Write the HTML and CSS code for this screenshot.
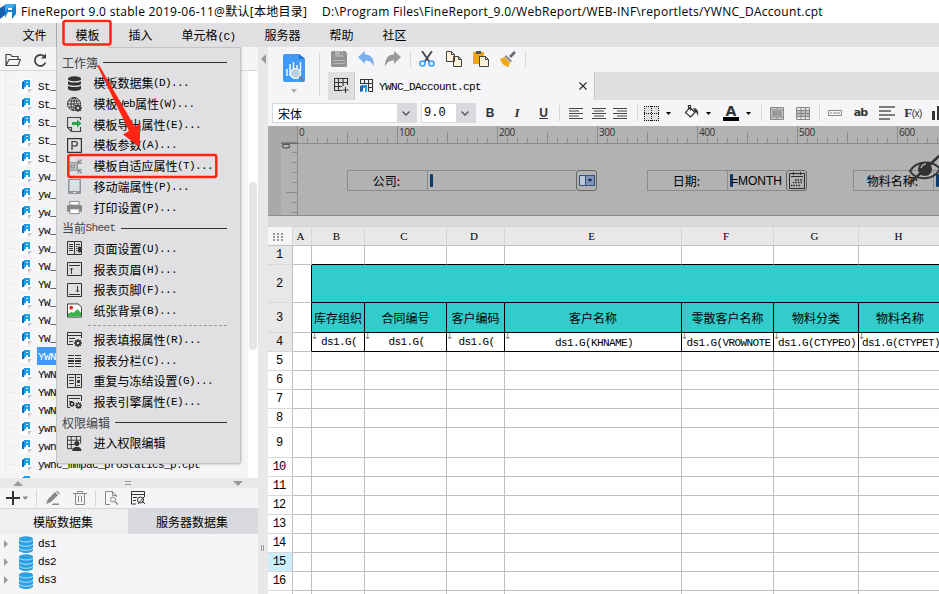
FILE: index.html
```
<!DOCTYPE html>
<html lang="zh-CN">
<head>
  <meta charset="utf-8">
  <title>FineReport 9.0</title>
  <link rel="stylesheet" href="styles.css">
</head>
<body>
  <svg class="defs">
    <symbol id="file" viewBox="0 0 12 14">
      <path d="M0 0h12v9l-4 5H0z" fill="#fff"/>
      <path d="M8 14V10h4z" fill="#c4c4c6"/>
      <path d="M2 3l3-2v6l-1 3H2z" fill="#0a6fc8"/>
      <path d="M4 1h6v7H8V6H6v2H4z" fill="#1b9ee6"/>
      <path d="M6 3h2v1H6z" fill="#d5ecfa"/>
    </symbol>
    <symbol id="db" viewBox="0 0 14 17">
      <path d="M0 3v11c0 4 14 4 14 0V3z" fill="#2aa1e0"/>
      <ellipse cx="7" cy="3" rx="7" ry="2.7" fill="#2aa1e0"/>
      <path d="M0 3.7c1 3 13 3 14 0M0 8c1 3 13 3 14 0M0 12c1 3 13 3 14 0" fill="none" stroke="#d9edf8" stroke-width=".8"/>
    </symbol>
    <symbol id="gear" viewBox="0 0 8 8">
      <circle cx="4" cy="4" r="2.1" fill="none" stroke="#333" stroke-width="1.6"/>
      <path d="M4 0v1.5M4 6.500V8M0 4h1.500M6.500 4H8M1.200 1.200l1 1M5.800 5.800l1 1M6.800 1.200l-1 1M2.200 5.800l-1 1" stroke="#333" stroke-width="1.400"/>
    </symbol>
    <symbol id="down" viewBox="0 0 5 3"><path d="M0 0h5L2.500 3z"/></symbol>
  </svg>

  <header class="titlebar">
    <svg width="16" height="17" viewBox="0 0 16 17">
      <path d="M0 5l5-3v10l-5 4z" fill="#1a5fae"/>
      <path d="M5 1h11v10l-4 5V9H8l-3 6z" fill="#1783d3"/>
      <path d="M5 1h11l-4 4H8L5 8z" fill="#38b0ee"/>
      <path d="M8 5h4v2H8z" fill="#fff"/>
    </svg>
    <span class="app">FineReport 9.0 stable 2019-06-11@默认[本地目录]</span>
    <span class="path">D:\Program Files\FineReport_9.0/WebReport/WEB-INF\reportlets/YWNC_DAccount.cpt</span>
  </header>

  <nav class="menubar">
    <span>文件</span><span>模板</span><span>插入</span><span>单元格<i>(C)</i></span><span>服务器</span><span>帮助</span><span>社区</span>
  </nav>

  <div class="main">
    <aside>
      <div class="tree-tools">
        <svg width="16" height="14" viewBox="0 0 16 14" fill="none" stroke="#444" stroke-width="1.200"><path d="M1 12V1.500h4.500l1.500 2h6V6M1 12.500L4 6.500h11.500L13 12.500z"/></svg>
        <svg width="15" height="15" viewBox="0 0 15 15" fill="none" stroke="#444" stroke-width="1.800"><path d="M12.500 9.500A5.500 5.500 0 1 1 11 3.300"/><path d="M13 .5v5H8z" fill="#444" stroke="none"/></svg>
      </div>
      <div class="tree">
        <ul>
          <li><svg><use href="#file"/></svg><i>St_</i>
          <li><svg><use href="#file"/></svg><i>St_</i>
          <li><svg><use href="#file"/></svg><i>St_</i>
          <li><svg><use href="#file"/></svg><i>St_</i>
          <li><svg><use href="#file"/></svg><i>St_</i>
          <li><svg><use href="#file"/></svg><i>yw_</i>
          <li><svg><use href="#file"/></svg><i>yw_</i>
          <li><svg><use href="#file"/></svg><i>yw_</i>
          <li><svg><use href="#file"/></svg><i>yw_</i>
          <li><svg><use href="#file"/></svg><i>yw_</i>
          <li><svg><use href="#file"/></svg><i>YW_</i>
          <li><svg><use href="#file"/></svg><i>YW_</i>
          <li><svg><use href="#file"/></svg><i>YW_</i>
          <li><svg><use href="#file"/></svg><i>YW_</i>
          <li><svg><use href="#file"/></svg><i>YW_</i>
          <li class="selected"><svg><use href="#file"/></svg><i>YWN</i>
          <li><svg><use href="#file"/></svg><i>YWN</i>
          <li><svg><use href="#file"/></svg><i>YWN</i>
          <li><svg><use href="#file"/></svg><i>YWN</i>
          <li><svg><use href="#file"/></svg><i>ywn</i>
          <li><svg><use href="#file"/></svg><i>ywn</i>
          <li><svg><use href="#file"/></svg><i>ywnc_mmpac_proStatics_p.cpt</i>
          <li><svg><use href="#file"/></svg>
        </ul>
        <div class="scroll"><div class="thumb"></div></div>
      </div>
      <div class="hsplit">
        <svg width="10" height="5"><path d="M0 5h10L5 0z"/></svg>
        <svg width="6" height="4"><path d="M0 0h6v1H0zM0 3h6v1H0z"/></svg>
        <svg width="10" height="5"><path d="M0 0h10L5 5z"/></svg>
      </div>
      <div class="ds-tools">
        <svg width="22" height="14" viewBox="0 0 22 14"><path d="M0 7h14M7 0v14" stroke="#333" stroke-width="2"/><path d="M16.500 5.500h5.500l-2.700 3.500z" fill="#888"/></svg>
        <b class="sep"></b>
        <svg width="15" height="14" viewBox="0 0 15 14" fill="#888"><path d="M0 13l2-5 7-7 3 3-7 7zM10 0l1-.5 3 3-1 1zM7 12.500h6V14H5.500z"/></svg>
        <svg width="14" height="14" viewBox="0 0 14 14" fill="none" stroke="#888"><path d="M0 2.500h14M4.500 2V.5h5V2M2.500 3v10.500h9V3M5.500 5v6M8.500 5v6"/></svg>
        <b class="sep"></b>
        <svg width="14" height="14" viewBox="0 0 14 14" fill="none" stroke="#888"><path d="M5 13.500H.5V.5h7l4 4V6M7.500.5v4h4"/><circle cx="8" cy="8.500" r="2.500"/><path d="M10 10.500l3 3" stroke-width="1.500"/></svg>
        <svg width="15" height="14" viewBox="0 0 15 14" fill="none" stroke="#333"><path d="M5 13H.5V.5h13V6M.5 3.500h13M2 6.500h4M2 9.500h3" /><circle cx="9.500" cy="9" r="3"/><path d="M7 13l6-7M11 10l3 3" /></svg>
      </div>
      <div class="ds-tabs"><span>模版数据集</span><span>服务器数据集</span></div>
      <ul class="datasets">
        <li><b></b><svg><use href="#db"/></svg><i>ds1</i>
        <li><b></b><svg><use href="#db"/></svg><i>ds2</i>
        <li><b></b><svg><use href="#db"/></svg><i>ds3</i>
      </ul>
    </aside>

    <div class="vsplit">
      <svg width="5" height="10"><path d="M5 0v10L0 5z"/></svg>
      <svg width="3" height="6"><path d="M0 0h1v6H0zM2 0h1v6H2z"/></svg>
    </div>

    <section>
      <div class="top">
        <div class="preview">
          <svg width="22" height="29" viewBox="0 0 22 29">
            <path d="M2 0h14l6 5v21a2 2 0 0 1-2 2H2a2 2 0 0 1-2-2V2a2 2 0 0 1 2-2z" fill="#3f9bf5"/>
            <path d="M16 0v5h6z" fill="#1c72cf"/>
            <path d="M4 22v-7M7 22v-12M10.500 18V8M14 16v-5M17.500 17V8" stroke="#fff" stroke-width="1.400"/>
            <circle cx="12.500" cy="19.500" r="5" fill="#b9d0e4" stroke="#fff" stroke-width="1.200"/>
            <path d="M16.500 22.500l4 5" stroke="#777" stroke-width="2"/>
          </svg>
          <svg width="6" height="4"><path d="M0 0h6L3 4z" fill="#aaa"/></svg>
        </div>
        <div class="stack">
          <div class="tools">
            <svg viewBox="0 0 16 16" fill="#929294"><path d="M1 0h13l2 2v13l-1 1H1l-1-1V1z"/><path d="M4 0h8v6H4z" fill="#b0b0b2"/><path d="M9 1h2v3H9z"/><path d="M2 9.500h12M2 12.500h12" stroke="#b8b8ba"/></svg>
            <svg viewBox="0 0 16 16" fill="#78aeea"><path d="M0 6l7-6v3.500c6 0 9 4 9 12-2-4-4-6-9-6V13z"/></svg>
            <svg viewBox="0 0 16 16" fill="#999"><path d="M16 6L9 0v3.500c-6 0-9 4-9 12 2-4 4-6 9-6V13z"/></svg>
            <b class="sep"></b>
            <svg viewBox="0 0 16 16" fill="none"><path d="M3 0l7.500 11M13 0L5.500 11" stroke="#444" stroke-width="1.800"/><g stroke="#3f9bf5" stroke-width="1.600"><circle cx="3.500" cy="12.500" r="2.500"/><circle cx="12.500" cy="12.500" r="2.500"/></g></svg>
            <svg viewBox="0 0 16 16" fill="#fff3dc" stroke="#444"><path d="M.5.500h5l3 3v7h-8zM7.500 5.500h5l3 3v7h-8z"/><path d="M5.500.5v3h3M12.500 5.500v3h3" fill="none"/></svg>
            <svg viewBox="0 0 16 16"><path d="M0 1h11v12H0z" fill="#efa514"/><path d="M3 0h5v3H3z" fill="#555"/><path d="M6.500 5.500h6l3 3v7h-9z" fill="#fff3dc" stroke="#444"/><path d="M12.500 5.500v3h3" fill="none" stroke="#444"/></svg>
            <svg viewBox="0 0 16 16"><path d="M15 1L10 6" stroke="#667" stroke-width="2.600"/><path d="M6 4l6 6-1.500 1.500-6-6z" fill="#888"/><path d="M4.500 6l5.500 6-1.500 4C4 15 1 12 0 8z" fill="#f2a71b"/></svg>
            <b class="sep"></b>
          </div>
          <div class="tabs">
            <span class="new"><svg width="15" height="15" viewBox="0 0 15 15" fill="none" stroke="#333" stroke-width="1.100"><path d="M13.500 7V.5H.5v12H8M.5 4.500h13M.5 8.500H8M4.500.5v12M9 .5V8M11.500 9v6M8.500 12h6"/></svg></span>
            <span class="tab">
              <svg width="14" height="14" viewBox="0 0 14 14"><path d="M.5 5V.5h12v12H9M.5 4.500h12M8 8.500h5M4.500.5V5M8.500.5v12" fill="none" stroke="#333" stroke-width="1.100"/><path d="M0 7l3-1v6l-3 1z" fill="#1a5fae"/><path d="M3 6h4v6l-2 2V9H3z" fill="#1b9ee6"/></svg>
              <i>YWNC_DAccount.cpt</i>
              <svg class="close" width="8" height="8" viewBox="0 0 8 8" stroke="#333" stroke-width="1.300"><path d="M.5.500l7 7M7.500.5l-7 7"/></svg>
            </span>
          </div>
        </div>
      </div>

      <div class="format">
        <span class="combo"><em>宋体</em><u><svg width="8" height="5"><path d="M.5.500L4 4 7.500.5"/></svg></u></span>
        <span></span>
        <span class="combo"><em><i>9.0</i></em><u><svg width="8" height="5"><path d="M.5.500L4 4 7.500.5"/></svg></u></span>
        <span class="bold">B</span>
        <span class="ital">I</span>
        <span class="under">U</span>
        <b class="sep"></b>
        <svg width="14" height="11" stroke="#444"><path d="M0 .5h14M0 3h10M0 5.500h14M0 8h10M0 10.500h14"/></svg>
        <svg width="14" height="11" stroke="#444"><path d="M0 .5h14M2 3h10M0 5.500h14M2 8h10M0 10.500h14"/></svg>
        <svg width="14" height="11" stroke="#444"><path d="M0 .5h14M4 3h10M0 5.500h14M4 8h10M0 10.500h14"/></svg>
        <b class="sep"></b>
        <svg width="15" height="15"><path d="M0 0h15v15H0z" fill="#e0e0e2"/><path d="M0 .5h15M0 7.500h15M0 14.500h15M.5 0v15M7.500 0v15M14.500 0v15" stroke="#111" stroke-dasharray="1 1"/></svg>
        <svg width="5" height="3"><use href="#down"/></svg>
        <svg width="16" height="16" viewBox="0 0 16 16"><path d="M0 12.500h16V16H0z" fill="#fff"/><path d="M7 2.500l5 5-4.500 4.500-5-4.500zM5.500 5V.5h2v5" fill="#fff" stroke="#333" stroke-width="1.200"/><path d="M10 3c4 0 6 3 5 8-1-2-1-4-3-4z" fill="#333"/></svg>
        <svg width="5" height="3"><use href="#down"/></svg>
        <span class="color">A</span>
        <svg width="5" height="3"><use href="#down"/></svg>
        <b class="sep shift"></b>
        <svg width="14" height="13" fill="#ccc" stroke="#888"><path d="M.5.500h13v12H.5zM.5 3h13M.5 10h13M7 .5V3M7 10v3"/><path d="M2 4h10v5H2z" fill="#999" stroke="none"/></svg>
        <svg width="14" height="13" fill="#e6e6e8" stroke="#888"><path d="M.5.500h13v12H.5z"/><path d="M1 3h12v7H1z" fill="#bbb" stroke="none"/><path d="M0 3.500h14M0 6.500h14M0 9.500h14M5 .5v12M9.500.5v12"/></svg>
        <b class="sep"></b>
        <svg width="14" height="6" fill="none" stroke="#888"><path d="M.5.500h13v5H.5zM2 3h2M5 3h7"/></svg>
        <span class="ab">ab</span>
        <svg width="16" height="14" stroke="#555" stroke-width="1.700"><path d="M0 1h16M0 5h12M0 9h16M0 13h11"/></svg>
        <span class="fx">F<small>(x)</small></span>
        <svg width="8" height="14" fill="#333"><path d="M0 5h3v9H0zM5 0h3v14H5z"/></svg>
      </div>

      <div class="params">
        <svg class="ruler" width="671" height="90">
          <defs>
            <pattern id="hticks" x="29" y="0" width="100" height="17" patternUnits="userSpaceOnUse">
              <path d="M.5 0v17M50.500 6v11M10.500 12v5M20.500 12v5M30.500 12v5M40.500 12v5M60.500 12v5M70.500 12v5M80.500 12v5M90.500 12v5" stroke="#8c8c8c"/>
            </pattern>
          </defs>
          <path d="M0 0h29v17H13v73H0z" fill="#a9a9a9"/>
          <path d="M29 0h642v17H29z" fill="url(#hticks)"/>
          <path d="M13 17.500h658M29.500 0v90M0 89.500h671M24 26.500h5M24 36.500h5M24 46.500h5M24 56.500h5M18 66.500h11M24 76.500h5M24 86.500h5" stroke="#8c8c8c" fill="none"/>
          <path d="M13 17h17" stroke="#555"/>
          <g class="nums">
            <text x="31" y="10">0</text><text x="131" y="10">100</text><text x="231" y="10">200</text><text x="331" y="10">300</text><text x="431" y="10">400</text><text x="531" y="10">500</text><text x="631" y="10">600</text>
            <text transform="translate(15 23) rotate(-90)" x="0" y="7">0</text>
          </g>
        </svg>
        <div class="widget w1"><span>公司:</span><p><b></b></p><s><svg width="16" height="11" fill="none" stroke="#34507e"><path d="M.5.500h15v10H.5z" fill="#bcc6d6"/><path d="M6.500.5h9v10h-9z" fill="#7f94b5"/><path d="M8.500 4h5L11 7z" fill="#112a5c" stroke="none"/></svg></s></div>
        <div class="widget w2"><span>日期:</span><p><b></b>=MONTH</p><s><svg width="16" height="17" fill="none" stroke="#2b2b2b"><path d="M.5 1.500h15v15H.5zM2 4.500h12M4.500 0v3M11.500 0v3"/><path d="M6 8h8M4 10.500h10M2 13.500h10" stroke-dasharray="1.500 1"  stroke-width="1.300"/></svg></s></div>
        <div class="widget w3"><span>物料名称:</span><p><b></b></p></div>
        <svg class="eye" width="32" height="30" viewBox="0 0 32 30"><path d="M1 16C7 6 23 4 31 14 25 25 8 27 1 16z" fill="none" stroke="#333" stroke-width="2"/><circle cx="16" cy="14" r="7" fill="#333"/><path d="M12 13c1-3 3-4 5-4" stroke="#aaa" stroke-width="1.500" fill="none"/><path d="M0 29L30 1" stroke="#333" stroke-width="2.500"/></svg>
      </div>

      <div class="sheet">
        <table>
          <colgroup><col class="n"><col class="a"><col class="b"><col class="c"><col class="d"><col class="e"><col class="f"><col class="g"><col class="h"></colgroup>
          <tr class="cols"><th class="corner"><svg width="11" height="8" fill="#999"><path d="M0 0h2v2H0zM4 0h2v2H4zM8 0h2v2H8zM0 3h2v2H0zM4 3h2v2H4zM8 3h2v2H8zM0 6h2v2H0zM4 6h2v2H4zM8 6h2v2H8z"/></svg><th>A<th>B<th>C<th>D<th>E<th>F<th>G<th>H
          <tr class="r1"><th>1<td><td><td><td><td><td><td><td>
          <tr class="r2"><th>2<td><td colspan="7">
          <tr class="r3"><th>3<td><td>库存组织<td>合同编号<td>客户编码<td>客户名称<td>零散客户名称<td>物料分类<td>物料名称
          <tr class="r4"><th>4<td><td><i>ds1.G(</i><td><i>ds1.G(</i><td><i>ds1.G(</i><td><i>ds1.G(KHNAME)</i><td><i>ds1.G(VROWNOTE</i><td><i>ds1.G(CTYPEO)</i><td><i>ds1.G(CTYPET)</i>
          <tr><th>5<td><td><td><td><td><td><td><td>
          <tr><th>6<td><td><td><td><td><td><td><td>
          <tr><th>7<td><td><td><td><td><td><td><td>
          <tr><th>8<td><td><td><td><td><td><td><td>
          <tr class="r9"><th>9<td><td><td><td><td><td><td><td>
          <tr><th>10<td><td><td><td><td><td><td><td>
          <tr><th>11<td><td><td><td><td><td><td><td>
          <tr><th>12<td><td><td><td><td><td><td><td>
          <tr><th>13<td><td><td><td><td><td><td><td>
          <tr><th>14<td><td><td><td><td><td><td><td>
          <tr class="current"><th>15<td><td><td><td><td><td><td><td>
          <tr><th>16<td><td><td><td><td><td><td><td>
          <tr><th><td><td><td><td><td><td><td><td>
        </table>
      </div>
    </section>
  </div>

  <!-- opened template menu -->
  <div class="menu">
    <h4>工作簿</h4>
    <div><svg viewBox="0 0 15 15"><path d="M1 2.500v10c0 3.200 13 3.200 13 0v-10z" fill="#333"/><ellipse cx="7.500" cy="2.800" rx="6.500" ry="2.500" fill="#333"/><path d="M1 4c1 2.500 12 2.500 13 0M1 8.500c1 2.500 12 2.500 13 0" fill="none" stroke="#e0e0e3" stroke-width="1.300"/></svg>模板数据集<i>(D)...</i></div>
    <div><svg viewBox="0 0 15 15"><g fill="none" stroke="#333"><circle cx="7" cy="7" r="6.500"/><ellipse cx="7" cy="7" rx="3" ry="6.500"/><path d="M.5 7h13M1.500 4h11M2 10h6M7 .5v13"/></g><circle cx="11" cy="11" r="4" fill="#e0e0e3"/><use href="#gear" x="7" y="7" width="8" height="8"/></svg>模板<i>Web</i>属性<i>(W)...</i></div>
    <div><svg viewBox="0 0 15 15"><path d="M13.500 3V.5H.5v10l4 4h9V10M.5 10.500h4v4" fill="none" stroke="#444" stroke-width="1.200"/><path d="M5 5h5V2.500L14.500 6.500 10 10.500V8H5z" fill="#2ea44a"/></svg>模板导出属性<i>(E)...</i></div>
    <div><svg viewBox="0 0 15 15" fill="none" stroke="#333" stroke-width="1.200"><path d="M.6.600h13.800v13.800H.6zM5 12V3.500h3c3 0 3 4.500 0 4.500H5"/></svg>模板参数<i>(A)...</i></div>
    <div><svg viewBox="0 0 16 15" fill="none" stroke="#8a8a8c" stroke-width="1.300"><path d="M1 3.500h10v8H1z" fill="#ccc"/><path d="M4 6h4v3H4z"/><path d="M16 0l-4 3.500M16 15l-4-4M12 0v4h4M12 15v-4h4"/></svg>模板自适应属性<i>(T)...</i></div>
    <div><svg viewBox="0 0 15 15"><rect x="1" y="0" width="13" height="15" rx="1" fill="#8e959b"/><path d="M2.500 1h10v11h-10z" fill="#dce0e4"/><path d="M6 13.500h3" stroke="#eee"/></svg>移动端属性<i>(P)...</i></div>
    <div><svg viewBox="0 0 16 15"><path d="M3 1h10v4H3z" fill="#fff" stroke="#888"/><path d="M0 5h16v7H0z" fill="#858587"/><path d="M3 9h10v5H3z" fill="#fff" stroke="#888"/></svg>打印设置<i>(P)...</i></div>
    <h4>当前<i>Sheet</i></h4>
    <div><svg viewBox="0 0 15 15" fill="none" stroke="#333"><path d="M.5.500h14v13H.5zM7.500.5v13M2 3.500h4M2 5.500h4M2 7.500h4M2 9.500h4M9 3.500h4M9 5.500h1.500M9 7.500h1.500M9 9.500h1.500"/><path d="M11.500 6v5h2V6z" fill="#333"/></svg>页面设置<i>(U)...</i></div>
    <div><svg viewBox="0 0 15 15" fill="none" stroke="#333"><path d="M.5.500h14v13H.5zM2 3.500h11M4.500 6v6M3 7.500L4.500 6 6 7.500"/></svg>报表页眉<i>(H)...</i></div>
    <div><svg viewBox="0 0 15 15" fill="none" stroke="#333"><path d="M.5.500h14v13H.5zM2 11.500h11M10.500 3v6M9 7.500L10.500 9 12 7.500"/></svg>报表页脚<i>(F)...</i></div>
    <div><svg viewBox="0 0 16 15"><path d="M.5.500H12l3.500 3.500v10.500H.5z" fill="#fff" stroke="#333"/><circle cx="4.500" cy="4.500" r="2" fill="#e22"/><path d="M1 14v-3l4-2 2 1 4-4 4 4v4z" fill="#36b54a"/></svg>纸张背景<i>(B)...</i></div>
    <hr>
    <div><svg viewBox="0 0 15 15" fill="none" stroke="#333"><path d="M14.500 6V.5H.5v12H6M.5 3.500h14M2 6.500h6M2 9.500h4"/><use href="#gear" x="7" y="7" width="8" height="8"/></svg>报表填报属性<i>(R)...</i></div>
    <div><svg viewBox="0 0 15 15" fill="none" stroke="#333" stroke-width="1"><path d="M1 2.500h6M8 2.500h6M1 5.500h6M8 5.500h6M1 10.500h6M8 10.500h6M1 13.500h6M8 13.500h6"/><path d="M1 8h6M8 8h6" stroke-width="2"/></svg>报表分栏<i>(C)...</i></div>
    <div><svg viewBox="0 0 15 15" fill="none" stroke="#333"><path d="M.5.500h14v13H.5zM8.500.5v13M2 3.500h5M2 6.500h5M2 9.500h5M10 3.500h3M10 11.500h3"/><path d="M10.500 6.500h2v2h-2z" fill="#333"/></svg>重复与冻结设置<i>(G)...</i></div>
    <div><svg viewBox="0 0 15 15" fill="none" stroke="#333"><path d="M14.500 6V.5H.5v12H3M2 3.500h11M2 6.500h3"/><use href="#gear" x="2" y="6" width="6" height="6"/><use href="#gear" x="8" y="7" width="7" height="7"/></svg>报表引擎属性<i>(E)...</i></div>
    <h4>权限编辑</h4>
    <div><svg viewBox="0 0 16 16" fill="none" stroke="#333"><path d="M6 13.500H.5V.5h14V8M.5 4.500h14M.5 9H8M4.500.5v13M10 .5V5"/><circle cx="10.500" cy="8" r="2.700" fill="#333" stroke="none"/><path d="M5.500 16c0-6 10-6 10 0z" fill="#333" stroke="none"/></svg>进入权限编辑</div>
  </div>

  <svg class="marks" width="240" height="200">
    <rect x="63.500" y="21" width="47" height="23.500" rx="2"/>
    <rect x="68.300" y="155" width="148" height="22" rx="2"/>
    <path d="M97 65l32 66-6 3.500 16.500 12.500 1-24-5.500 4L99 65z"/>
  </svg>
</body>
</html>
```
FILE: styles.css
```
* {
  box-sizing: border-box;
}
html, body {
  margin: 0;
  height: 594px;
  overflow: hidden;
}
body {
  position: relative;
  width: 939px;
  background: #f5f5f8;
  color: #000;
  font: 12px/18px "Noto Sans CJK SC", sans-serif;
  white-space: nowrap;
}
svg {
  display: block;
  flex: none;
}
.defs {
  position: absolute;
  width: 0;
  height: 0;
}
/* half-width characters, 6px each */
i {
  font: 11px/18px "Liberation Mono", monospace;
  letter-spacing: -0.6px;
}
ul {
  list-style: none;
  margin: 0;
  padding: 0;
}
.sep {
  width: 1px;
  height: 16px;
  background: #d6d6d9;
}

.titlebar {
  display: flex;
  align-items: center;
  height: 23px;
  background: #fff;
  font: 12px/22px "Open Sans", "Noto Sans CJK SC", sans-serif;
  letter-spacing: 0.29px;
}
.titlebar .app {
  width: 301px;
  padding-left: 5px;
}
.titlebar .path {
  padding-left: 5px;
}
.menubar {
  display: flex;
  gap: 29px;
  height: 24px;
  padding-left: 22.5px;
  line-height: 23px;
  background: #e0e0e3;
}

.main {
  display: flex;
  height: 547px;
}
aside {
  width: 258px;
  display: flex;
  flex-direction: column;
}
.tree-tools {
  display: flex;
  gap: 12px;
  height: 24px;
  padding: 6px 5px 0;
  border-bottom: 1px solid #d6d6d9;
}
.tree {
  display: flex;
  height: 407px;
  overflow: hidden;
}
.tree ul {
  width: 248px;
  margin-left: 5px;
  padding-top: 6px;
  border-left: 1px solid #ececef;
}
.tree li {
  display: flex;
  align-items: center;
  height: 18px;
}
.tree li::before {
  content: "";
  width: 9px;
  margin-right: 5px;
  border-top: 1px solid #ececef;
}
.tree li svg {
  width: 12px;
  height: 14px;
  margin-right: 5px;
}
.tree li i {
  padding-left: 1px;
  line-height: 20px;
  height: 18px;
}
.tree .selected i {
  width: 60px;
  background: #3f9bff;
  color: #fff;
}
.scroll {
  width: 10px;
  background: #fff;
  padding: 111px 1px 0;
}
.thumb {
  height: 168px;
  border-radius: 4px;
  background: #e6e6e8;
}
.hsplit {
  display: flex;
  align-items: center;
  justify-content: space-between;
  height: 10px;
  padding: 0 15px 0 13px;
  background: #e8e8e8;
  fill: #999;
}
.ds-tools {
  display: flex;
  align-items: center;
  height: 21px;
  padding-left: 6px;
  border-bottom: 1px solid #d6d6d9;
}
.ds-tools .sep {
  margin: 0 9px 0 8px;
}
.ds-tools .sep + svg + svg {
  margin-left: 12px;
}
.ds-tabs {
  display: flex;
  height: 25px;
  line-height: 26px;
  text-align: center;
}
.ds-tabs span {
  width: 128px;
  padding-right: 2px;
  background: #efeff2;
}
.ds-tabs span + span {
  width: 130px;
  background: #d9dadd;
}
.datasets {
  padding-top: 1px;
}
.datasets li {
  display: flex;
  align-items: center;
  height: 18px;
  padding-left: 4px;
}
.datasets b {
  width: 15px;
  border: 4px solid transparent;
  border-left-color: #999;
}
.datasets svg {
  width: 14px;
  height: 17px;
  margin-right: 5px;
}

.vsplit {
  width: 10px;
  padding: 7px 0 0 3px;
  background: #e8e8e8;
  fill: #999;
}
.vsplit svg + svg {
  margin: 481px 0 0;
}

section {
  width: 671px;
  overflow: hidden;
}
.top {
  display: flex;
  height: 53px;
}
.preview {
  width: 52px;
  height: 43px;
  margin-top: 6px;
  padding: 1px 0 0 15px;
  border-right: 1px solid #d6d6d9;
}
.preview svg + svg {
  margin: 6px 0 0 8px;
}
.stack {
  width: 619px;
}
.tools {
  display: flex;
  align-items: center;
  gap: 11px;
  height: 24px;
  padding-left: 11px;
}
.tools svg {
  width: 16px;
  height: 16px;
}
.tools .sep {
  margin: 0 -2.5px;
}
.tabs {
  display: flex;
  height: 28px;
  margin: 1px 0 0 8px;
  background: #dfdfe1;
}
.new {
  width: 27px;
  padding: 6px 0 0 6px;
  border-right: 1px solid #c8c8cb;
}
.tab {
  display: flex;
  align-items: center;
  width: 240px;
  padding: 0 7px 0 5px;
  border-right: 1px solid #c8c8cb;
  background: #f5f5f8;
}
.tab i {
  padding: 1px 0 0 5px;
}
.close {
  margin-left: auto;
}

.format {
  display: grid;
  grid-template-columns: 145px 4px 55px 28px 26px 27px 5px 28px 18px 24px 10px 19px 15px 30px 5px 35px 5px 15px 22px 30px 3px 28px 23px 30px 22px 24px;
  align-items: center;
  justify-items: center;
  height: 26px;
  padding-left: 4px;
}
.combo {
  display: flex;
  width: 100%;
  height: 20px;
  border: 1px solid #d9dadd;
  background: #fff;
}
.combo em {
  flex: 1;
  padding-left: 5px;
  font-style: normal;
  line-height: 20px;
}
.combo em i {
  display: block;
  margin-left: -3px;
  font-size: 12px;
  letter-spacing: 0;
}
.combo u {
  width: 19px;
  padding: 7px 0 0 5px;
  background: #d9dadd;
}
.combo u svg {
  fill: none;
  stroke: #555;
  stroke-width: 1.4;
}
.bold, .ital, .under, .color, .ab {
  color: #333;
  font: bold 12px/14px "Liberation Sans", sans-serif;
}
.ital {
  font: italic bold 13px/14px "Liberation Serif", serif;
}
.under {
  text-decoration: underline;
}
.color {
  width: 16px;
  height: 16px;
  margin-left: 5px;
  border-bottom: 4px solid #000;
  font: bold 14px/12px "DejaVu Sans", sans-serif;
  text-align: center;
}
.shift {
  margin-left: 6px;
}
.ab {
  font: bold 11px/14px "DejaVu Sans", sans-serif;
  letter-spacing: -1px;
}
.fx {
  color: #333;
  font: bold 13px/14px "Liberation Serif", serif;
  letter-spacing: -0.5px;
}
.fx small {
  font: 10px "Liberation Sans", sans-serif;
}

.params {
  position: relative;
  height: 90px;
  background: #b2b2b2;
}
.nums {
  fill: #333;
  font: 10px "Open Sans", sans-serif;
  letter-spacing: -0.5px;
}
/* widgets sit freely on the parameter canvas */
.widget {
  position: absolute;
  top: 44px;
  display: flex;
  height: 21px;
}
.w1 { left: 79px; }
.w2 { left: 379px; }
.w3 { left: 585px; }
.widget span {
  width: 81px;
  padding-right: 2px;
  border: 1px solid #8c8c8c;
  text-align: center;
  line-height: 20px;
}
.widget p {
  display: flex;
  align-items: center;
  overflow: hidden;
  width: 148px;
  margin: 0;
  padding-left: 2px;
  border: solid #8c8c8c;
  border-width: 1px 0;
  font-family: "Liberation Sans", sans-serif;
}
.w2 p {
  width: 58px;
}
.widget p b {
  width: 3px;
  height: 13px;
  margin-right: -2px;
  border-radius: 1px;
  background: #0d3c6b;
  flex: none;
}
.widget s {
  display: flex;
  align-items: center;
  justify-content: center;
  width: 21px;
  border: 1px solid #666;
  border-radius: 3px;
  text-decoration: none;
}
.eye {
  position: absolute;
  left: 641px;
  top: 29px;
}

.sheet {
  height: 378px;
  overflow: hidden;
  border-top: 10px solid #d9dadc;
  background: #fff;
}
table {
  width: 674px;
  table-layout: fixed;
  border-collapse: separate;
  border-spacing: 0;
}
.n { width: 25px; }
.a { width: 19px; }
.b { width: 53px; }
.c { width: 82px; }
.d { width: 58px; }
.e { width: 177px; }
.f { width: 92px; }
.g { width: 85px; }
.h { width: 83px; }
th, td {
  height: 19px;
  padding: 0;
  border: solid #c0c0c0;
  border-width: 0 1px 1px 0;
  font-weight: normal;
  text-align: center;
  line-height: 17px;
  overflow: hidden;
}
th {
  padding: 1px 2px 0 0;
  font: 12px/17px "Liberation Mono", monospace;
  letter-spacing: -1px;
  border-bottom-color: #d9d9dc;
}
.cols th {
  height: 20px;
  padding: 1px 3px 0 0;
  background: #e8e8e8;
  border-color: #d6d6d8 #d6d6d8 #c0c0c0;
  border-top-width: 1px;
  font: 11px/17px "Liberation Serif", serif;
  letter-spacing: 0;
}
.cols .corner {
  background: #f5f5f8;
}
.corner svg {
  margin-left: 5px;
}
tr:nth-child(-n+5):not(.cols) th {
  background: #e8e8e8;
}
.r1 td:nth-child(n+3) {
  border-bottom-color: #000;
}
.r2 td, .r2 th {
  height: 38px;
}
.r3 td, .r3 th, .r9 td, .r9 th {
  height: 30px;
}
.r2 td:nth-child(n+3), .r3 td:nth-child(n+3) {
  background: #33cbcc;
}
.r2 td, .r3 td, .r4 td {
  border-color: #000;
}
.r2 td:nth-child(2), .r3 td:nth-child(2), .r4 td:nth-child(2) {
  border-bottom-color: #c0c0c0;
}
.r4 td {
  position: relative;
}
.r4 td i {
  display: block;
  padding-left: 2px;
  line-height: 18px;
  height: 18px;
}
.r4 td:nth-child(n+6) i {
  line-height: 20px;
}
/* expand-down marker */
.r4 td:nth-child(n+3)::before {
  content: "↓";
  position: absolute;
  left: -1px;
  top: -5px;
  color: #777;
  font: 9px/17px "DejaVu Sans", sans-serif;
}
.current th {
  background: #cdeffb;
}

.menu {
  position: absolute;
  left: 56px;
  top: 47px;
  width: 185px;
  height: 417px;
  padding-top: 5.4px;
  border: solid #c4c4c8;
  border-width: 0 1px 1px;
  border-radius: 0 0 4px 4px;
  background: #e0e0e3;
  box-shadow: 1px 1px 2px #0002;
}
.menu::before {
  content: "";
  position: absolute;
  left: -1px;
  top: -24px;
  height: 24px;
  border-left: 1px solid #aaa;
}
.menu::after {
  content: "";
  position: absolute;
  left: 51px;
  right: 0;
  top: 0;
  border-top: 1px solid #c4c4c8;
}
.menu h4, .menu div {
  display: flex;
  align-items: center;
  height: 20.7px;
  margin: 0;
  font-weight: normal;
}
.menu h4 {
  padding: 0 13px 0 5px;
  color: #444;
}
.menu h4::after {
  content: "";
  flex: 1;
  margin-left: 5px;
  border-top: 1px solid #333;
}
.menu div {
  padding-left: 10px;
}
.menu div svg {
  width: 15px;
  height: 15px;
  margin-right: 11.5px;
}
.menu i {
  margin-left: -0.5px;
}
.menu hr {
  height: 1px;
  margin: 4px 13px 3.3px 31px;
  border: 0;
  border-top: 1px dashed #999;
}

.marks {
  position: absolute;
  left: 0;
  top: 0;
  fill: none;
  stroke: #ff2413;
  stroke-width: 2.5;
}
.marks path {
  fill: #ff2413;
  stroke: none;
}
```
